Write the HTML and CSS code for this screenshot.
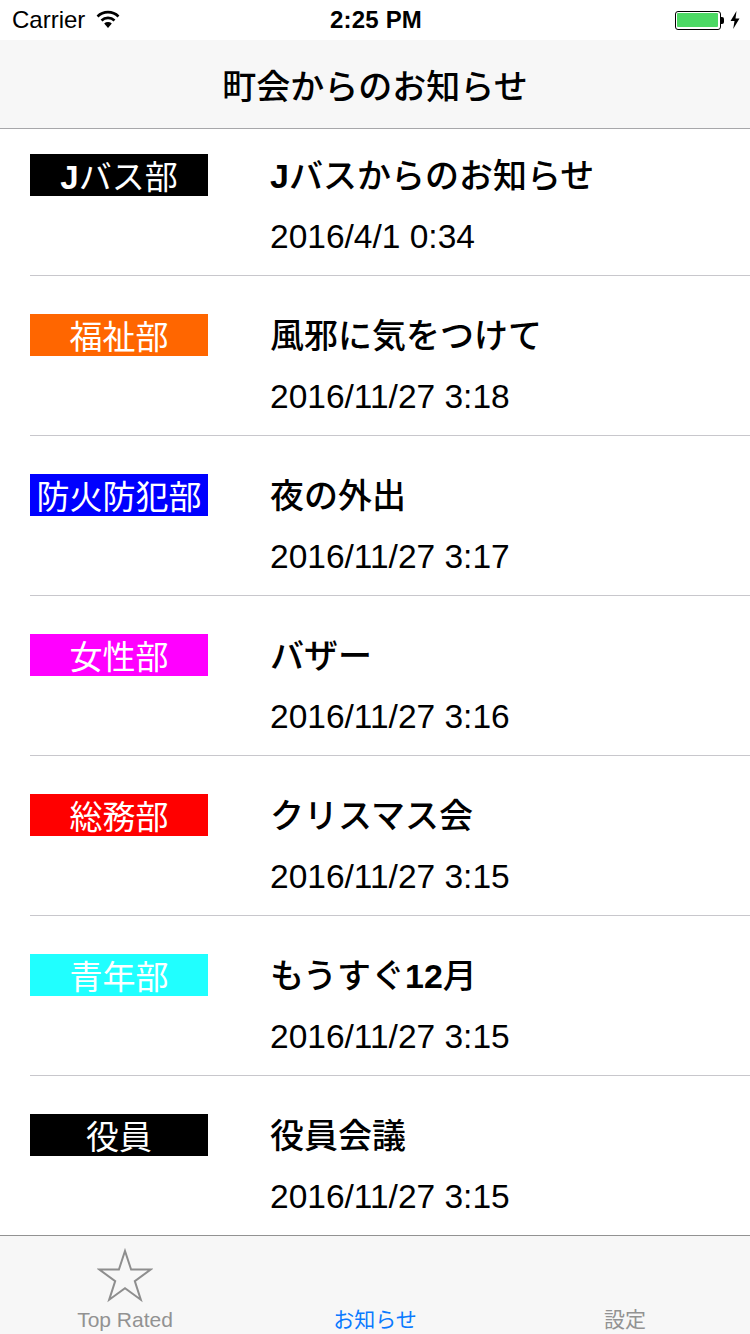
FILE: index.html
```html
<!DOCTYPE html>
<html lang="ja">
<head>
<meta charset="utf-8">
<title>町会からのお知らせ</title>
<link rel="stylesheet" href="styles.css">
</head>
<body>
<div class="screen">
  <div class="status">
    <div class="status-left">
      <span class="carrier">Carrier</span>
      <svg class="wifi" width="26" height="20" viewBox="0 0 26 20">
        <path d="M13 19 L9.2 14.6 A5.6 5.6 0 0 1 16.8 14.6 Z" fill="#000"/>
        <path d="M5.6 10.6 A10.6 10.6 0 0 1 20.4 10.6 L18.6 12.6 A8 8 0 0 0 7.4 12.6 Z" fill="#000"/>
        <path d="M1.6 6.4 A16.4 16.4 0 0 1 24.4 6.4 L22.6 8.4 A13.8 13.8 0 0 0 3.4 8.4 Z" fill="#000"/>
      </svg>
    </div>
    <div class="time">2:25 PM</div>
    <div class="status-right">
      <div class="battery"><div class="battery-fill"></div></div>
      <div class="battery-nib"></div>
      <svg class="bolt" width="10" height="18" viewBox="0 0 10 18">
        <path d="M6.5 0 L0.5 10 L4.5 10 L3.2 18 L9.5 7.5 L5.5 7.5 Z" fill="#000"/>
      </svg>
    </div>
  </div>
  <div class="nav">町会からのお知らせ</div>
  <div class="list">
    <div class="row first">
      <div class="tag tag-black"><b class="latin">J</b>バス部</div>
      <div class="info">
        <div class="title"><b class="latin">J</b>バスからのお知らせ</div>
        <div class="date">2016/4/1 0:34</div>
      </div>
    </div>
    <div class="row">
      <div class="tag tag-orange">福祉部</div>
      <div class="info">
        <div class="title">風邪に気をつけて</div>
        <div class="date">2016/11/27 3:18</div>
      </div>
    </div>
    <div class="row">
      <div class="tag tag-blue">防火防犯部</div>
      <div class="info">
        <div class="title">夜の外出</div>
        <div class="date">2016/11/27 3:17</div>
      </div>
    </div>
    <div class="row">
      <div class="tag tag-magenta">女性部</div>
      <div class="info">
        <div class="title">バザー</div>
        <div class="date">2016/11/27 3:16</div>
      </div>
    </div>
    <div class="row">
      <div class="tag tag-red">総務部</div>
      <div class="info">
        <div class="title">クリスマス会</div>
        <div class="date">2016/11/27 3:15</div>
      </div>
    </div>
    <div class="row">
      <div class="tag tag-cyan">青年部</div>
      <div class="info">
        <div class="title">もうすぐ<b class="latin">12</b>月</div>
        <div class="date">2016/11/27 3:15</div>
      </div>
    </div>
    <div class="row">
      <div class="tag tag-black">役員</div>
      <div class="info">
        <div class="title">役員会議</div>
        <div class="date">2016/11/27 3:15</div>
      </div>
    </div>
  </div>
  <div class="tabbar">
    <div class="tab">
      <svg class="star" width="56" height="56" viewBox="0 0 56 56">
        <path d="M28 3 L34.1 21.6 L53.6 21.6 L37.8 33.1 L43.8 51.7 L28 40.2 L12.2 51.7 L18.2 33.1 L2.4 21.6 L21.9 21.6 Z" fill="none" stroke="#8e8e8e" stroke-width="2" stroke-linejoin="miter"/>
      </svg>
      <span class="tab-label">Top Rated</span>
    </div>
    <div class="tab">
      <span class="tab-label active">お知らせ</span>
    </div>
    <div class="tab">
      <span class="tab-label">設定</span>
    </div>
  </div>
</div>
</body>
</html>
```

FILE: styles.css
```css
* { box-sizing: border-box; }
html, body { margin: 0; padding: 0; }
body {
  width: 750px;
  height: 1334px;
  overflow: hidden;
  background: #fff;
  font-family: "Liberation Sans", "Noto Sans CJK JP", sans-serif;
  color: #000;
}
.screen {
  width: 750px;
  height: 1334px;
  display: flex;
  flex-direction: column;
}
.status {
  height: 40px;
  flex: none;
  display: flex;
  align-items: center;
  justify-content: space-between;
  padding: 0 10px 0 12px;
  background: #fff;
}
.status-left {
  display: flex;
  align-items: center;
  gap: 10px;
  width: 200px;
}
.carrier {
  font-size: 24px;
  line-height: 40px;
}
.wifi { margin-top: -2px; }
.time {
  font-size: 24px;
  font-weight: 700;
  line-height: 40px;
  letter-spacing: 0.2px;
}
.status-right {
  width: 200px;
  display: flex;
  align-items: center;
  justify-content: flex-end;
}
.battery {
  width: 46px;
  height: 19px;
  border: 1.5px solid #000;
  border-radius: 3px;
  padding: 1.5px;
}
.battery-fill {
  width: 100%;
  height: 100%;
  background: #4cd964;
  border-radius: 1px;
}
.battery-nib {
  width: 3px;
  height: 7px;
  background: #000;
  border-radius: 0 2px 2px 0;
  margin-right: 6px;
}
.nav {
  height: 89px;
  flex: none;
  background: #f7f7f7;
  border-bottom: 1px solid #a7a7aa;
  display: flex;
  align-items: center;
  justify-content: center;
  font-family: "Noto Sans CJK JP", sans-serif;
  font-size: 34px;
  font-weight: 500;
  padding-top: 1px;
}
.list {
  flex: 1;
  overflow: hidden;
}
.row {
  display: flex;
  align-items: flex-start;
  gap: 62px;
  padding: 38px 0 18px 30px;
  position: relative;
}
.row.first { padding-top: 25px; }
.row::after {
  content: "";
  position: absolute;
  left: 30px;
  right: 0;
  bottom: 0;
  height: 1px;
  background: #c8c7cc;
}
.tag {
  width: 178px;
  height: 42px;
  flex: none;
  color: #fff;
  font-family: "Noto Sans CJK JP", sans-serif;
  font-size: 33px;
  line-height: 42px;
  text-align: center;
  white-space: nowrap;
}
.latin {
  font-family: "Liberation Sans", sans-serif;
  font-weight: 700;
  line-height: 1;
}
.tag-black { background: #000; }
.tag-orange { background: #ff6600; }
.tag-blue { background: #0000ff; }
.tag-magenta { background: #ff00ff; }
.tag-red { background: #ff0000; }
.tag-cyan { background: #20ffff; }
.info {
  display: flex;
  flex-direction: column;
  gap: 20px;
}
.title {
  font-family: "Noto Sans CJK JP", sans-serif;
  font-size: 34px;
  font-weight: 500;
  line-height: 42px;
  height: 42px;
  white-space: nowrap;
  margin-top: -1px;
  margin-bottom: 1px;
}
.date {
  font-size: 33.5px;
  line-height: 42px;
  height: 42px;
  white-space: nowrap;
}
.tabbar {
  height: 99px;
  flex: none;
  background: #f7f7f7;
  border-top: 1px solid #929292;
  display: grid;
  grid-template-columns: 1fr 1fr 1fr;
}
.tab {
  display: flex;
  flex-direction: column;
  align-items: center;
  justify-content: flex-end;
  padding-bottom: 2px;
  position: relative;
}
.star {
  position: absolute;
  left: 50%;
  top: 12px;
  margin-left: -28px;
}
.tab-label {
  font-family: "Liberation Sans", "Noto Sans CJK JP", sans-serif;
  font-size: 21px;
  line-height: 24px;
  color: #929292;
}
.tab-label.active { color: #0a7aff; }
```
